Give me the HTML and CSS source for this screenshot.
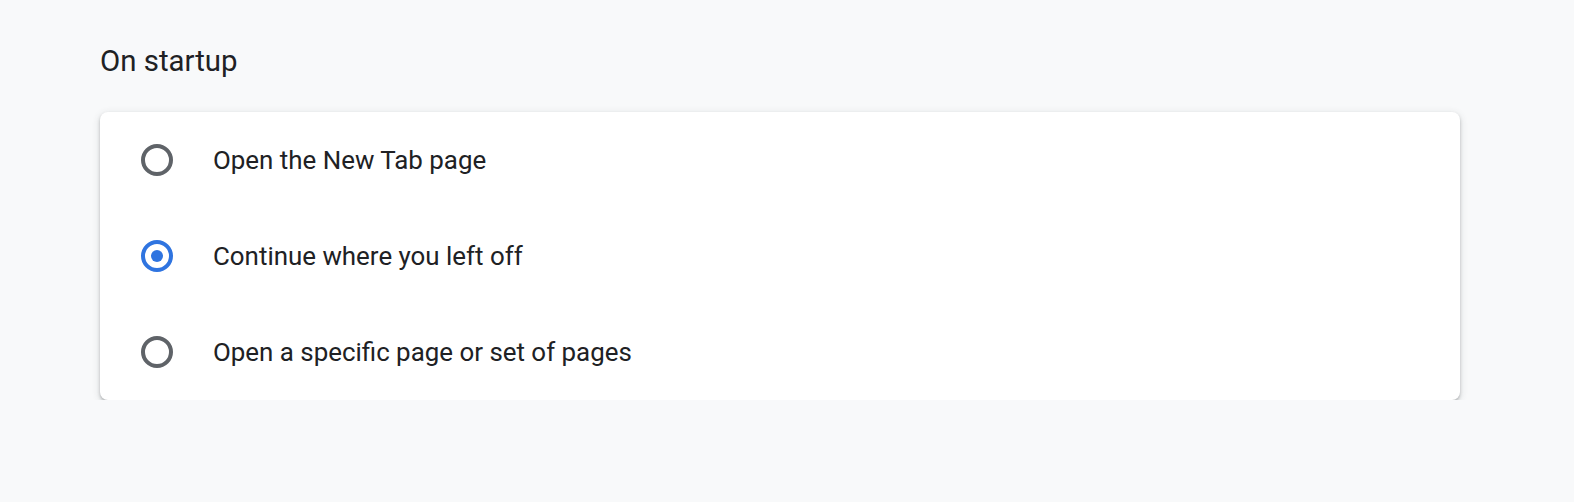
FILE: index.html
```html
<!DOCTYPE html>
<html lang="en">
<head>
    <meta charset="UTF-8">
    <title>On startup</title>
    <link rel="stylesheet" href="styles.css">
</head>
<body>
    <div class="page">
        <h2 class="section-title">On startup</h2>

        <!-- Startup options -->
        <div class="card">
            <label class="option">
                <span class="radio"></span>
                <span class="option-label">Open the New Tab page</span>
            </label>
            <label class="option">
                <span class="radio checked"></span>
                <span class="option-label">Continue where you left off</span>
            </label>
            <label class="option">
                <span class="radio"></span>
                <span class="option-label">Open a specific page or set of pages</span>
            </label>
        </div>
    </div>
</body>
</html>
```

FILE: styles.css
```css
/* Global */
body {
    margin: 0;
    background-color: #f8f9fa;
    font-family: 'Roboto', 'Liberation Sans', sans-serif;
    color: #202124;
}

.page {
    padding: 41px 114px 0 100px;
}

/* Title */
.section-title {
    margin: 0 0 31px;
    font-size: 29.4px;
    font-weight: 400;
    line-height: 40px;
    color: #202124;
}

/* Card */
.card {
    width: 1360px;
    background-color: #fff;
    border-radius: 8px;
    box-shadow: 0 2px 3px rgba(60, 64, 67, 0.3), 0 2px 6px 2px rgba(60, 64, 67, 0.1);
    display: flex;
    flex-direction: column;
}

.option {
    display: flex;
    align-items: center;
    height: 96px;
    padding-left: 41px;
    gap: 40px;
    font-size: 25.9px;
    cursor: pointer;
}

/* Radio buttons */
.radio {
    width: 32px;
    height: 32px;
    box-sizing: border-box;
    border: 4px solid #5f6368;
    border-radius: 50%;
    display: flex;
    align-items: center;
    justify-content: center;
    flex-shrink: 0;
}

.radio.checked {
    border-color: #2f74e0;
}

.radio.checked::after {
    content: "";
    width: 12px;
    height: 12px;
    border-radius: 50%;
    background-color: #2f74e0;
}
```
